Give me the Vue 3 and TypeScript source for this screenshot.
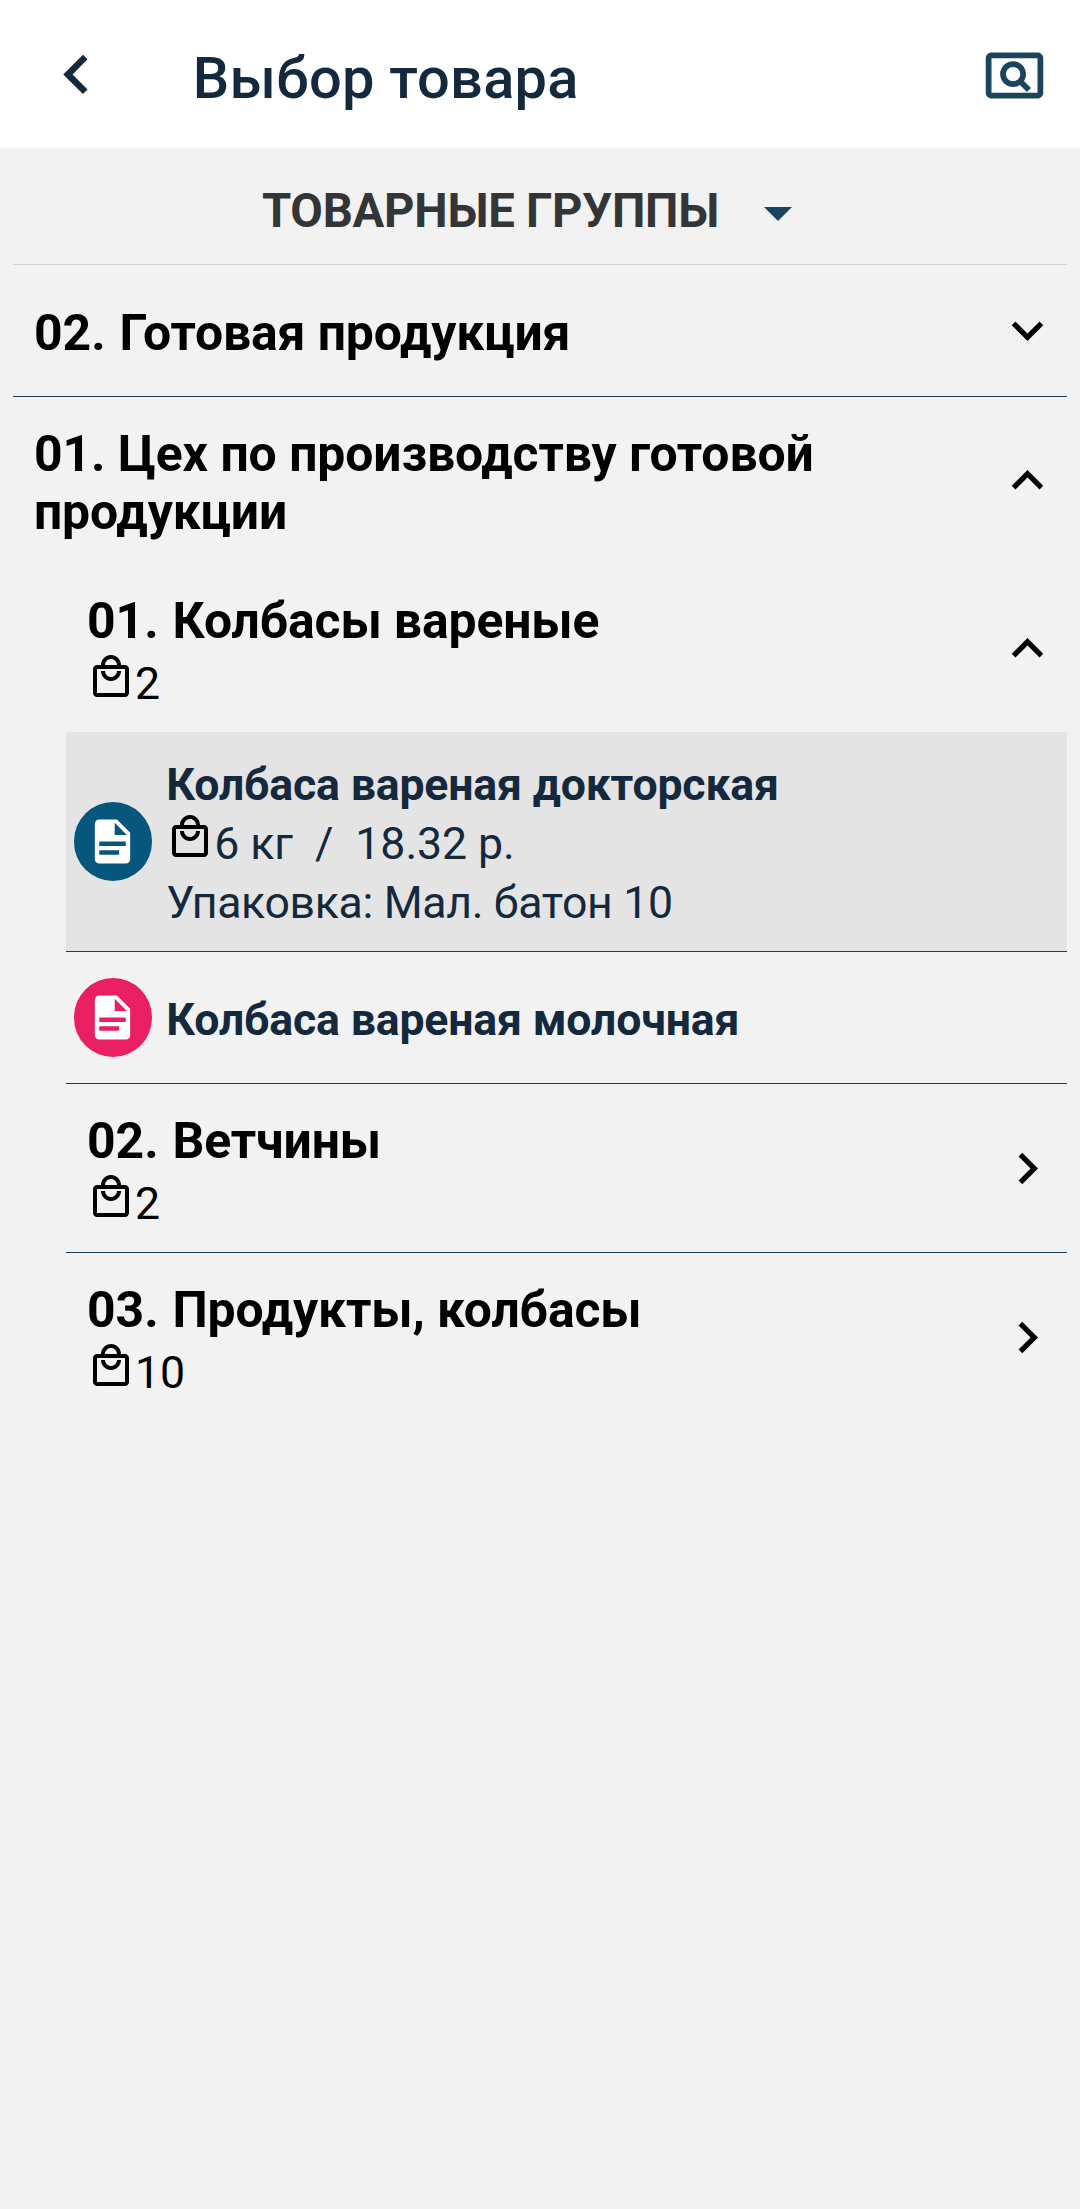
<script setup lang="ts">
interface Product {
  name: string
  selected: boolean
  quantity?: string
  packaging?: string
}
interface Group {
  code: string
  title: string
  count: number
  open: boolean
  products: Product[]
}

const icons = {
  back: 'M15.41 16.58 10.83 12l4.58-4.59L14 6l-6 6 6 6z',
  search:
    'M11.49 16c.88 0 1.7-.26 2.39-.7l2.44 2.44 1.42-1.42-2.44-2.43c.44-.7.7-1.51.7-2.39C16 9.01 13.99 7 11.5 7S7 9.01 7 11.5 9.01 16 11.49 16zm.01-7a2.5 2.5 0 0 1 0 5 2.5 2.5 0 0 1 0-5zM20 4H4c-1.1 0-2 .9-2 2v12c0 1.1.9 2 2 2h16c1.1 0 2-.9 2-2V6c0-1.1-.9-2-2-2zm0 14H4V6h16v12z',
  down: 'M7.41 8.59 12 13.17l4.59-4.58L18 10l-6 6-6-6z',
  up: 'M7.41 15.41 12 10.83l4.59 4.58L18 14l-6-6-6 6z',
  right: 'M8.59 16.59 13.17 12 8.59 7.41 10 6l6 6-6 6z',
  bag: 'M19 6h-2c0-2.76-2.24-5-5-5S7 3.24 7 6H5c-1.1 0-1.99.9-1.99 2L3 20c0 1.1.9 2 2 2h14c1.1 0 2-.9 2-2V8c0-1.1-.9-2-2-2zm-7-3c1.66 0 3 1.34 3 3H9c0-1.66 1.34-3 3-3zm7 17H5V8h14v12zm-7-8c-1.66 0-3-1.34-3-3H7c0 2.76 2.24 5 5 5s5-2.24 5-5h-2c0 1.66-1.34 3-3 3z',
  doc: 'M13 9h5.5L13 3.5V9M6 2h8l6 6v12a2 2 0 0 1-2 2H6a2 2 0 0 1-2-2V4c0-1.11.89-2 2-2m9 16v-2H6v2h9m3-4v-2H6v2h12Z',
}

const groups: Group[] = [
  {
    code: '01.',
    title: 'Колбасы вареные',
    count: 2,
    open: true,
    products: [
      {
        name: 'Колбаса вареная докторская',
        selected: true,
        quantity: '6 кг  /  18.32 р.',
        packaging: 'Упаковка: Мал. батон 10',
      },
      { name: 'Колбаса вареная молочная', selected: false },
    ],
  },
  { code: '02.', title: 'Ветчины', count: 2, open: false, products: [] },
  { code: '03.', title: 'Продукты, колбасы', count: 10, open: false, products: [] },
]
</script>

<template>
  <div class="screen">
    <header class="appbar">
      <svg class="back" viewBox="0 0 24 24"><path :d="icons.back" /></svg>
      <h1>Выбор товара</h1>
      <svg class="search" viewBox="0 0 24 24"><path :d="icons.search" /></svg>
    </header>

    <main>
      <div class="filter">
        <span>ТОВАРНЫЕ ГРУППЫ</span>
        <svg viewBox="0 0 28 14"><path d="M0 0h28L14 14z" /></svg>
      </div>

      <div class="section ruled">
        <span class="title"><span class="code">02.</span> Готовая продукция</span>
        <svg class="chevron" viewBox="0 0 24 24"><path :d="icons.down" /></svg>
      </div>
      <div class="section tall">
        <span class="title">01. Цех по производству готовой продукции</span>
        <svg class="chevron" viewBox="0 0 24 24"><path :d="icons.up" /></svg>
      </div>

      <div class="children">
        <template v-for="(group, i) in groups" :key="group.title">
          <div class="group" :class="{ ruled: !group.open && i < groups.length - 1 }">
            <div class="label">
              <span class="title"><span class="code">{{ group.code }}</span> {{ group.title }}</span>
              <span class="count">
                <svg class="bag" viewBox="0 0 24 24"><path :d="icons.bag" /></svg>{{ group.count }}
              </span>
            </div>
            <svg class="chevron" viewBox="0 0 24 24">
              <path :d="group.open ? icons.up : icons.right" />
            </svg>
          </div>
          <div
            v-for="product in group.products"
            :key="product.name"
            class="product ruled"
            :class="{ selected: product.selected }"
          >
            <span class="avatar">
              <svg viewBox="0 0 24 24"><path :d="icons.doc" /></svg>
            </span>
            <div class="info">
              <span class="name">{{ product.name }}</span>
              <span v-if="product.quantity" class="quantity">
                <svg class="bag" viewBox="0 0 24 24"><path :d="icons.bag" /></svg
                ><span>{{ product.quantity }}</span>
              </span>
              <span v-if="product.packaging" class="packaging">{{ product.packaging }}</span>
            </div>
          </div>
        </template>
      </div>
    </main>
  </div>
</template>

<style>
body {
  background: #f2f2f2;
}
</style>

<style scoped>
.screen {
  width: 1080px;
  min-height: 2209px;
  background: #f2f2f2;
  font-family: Roboto, 'Noto Sans', sans-serif;
  color: #000;
}
svg {
  display: block;
  flex: none;
  fill: currentColor;
}
.appbar {
  display: flex;
  align-items: center;
  box-sizing: border-box;
  height: 148px;
  padding: 0 31px 0 37px;
  background: #fff;
  color: #14293d;
}
.back {
  width: 78.75px;
  height: 78.75px;
}
.appbar h1 {
  flex: 1;
  margin: 8px 0 0 77px;
  font-size: 57.75px;
  line-height: 68px;
  font-weight: 500;
  letter-spacing: 0.25px;
}
.search {
  width: 69px;
  height: 69px;
  margin-top: 2px;
  color: #1b455e;
}
main {
  padding: 0 13px;
}
.filter {
  display: flex;
  justify-content: center;
  align-items: center;
  box-sizing: border-box;
  height: 117px;
  padding-right: 26px;
  gap: 45px;
  border-bottom: 1px solid #d3d3d3;
  color: #343536;
  font-size: 47.25px;
  font-weight: 700;
  letter-spacing: -0.25px;
}
.filter span {
  padding-top: 10px;
}
.filter svg {
  width: 28px;
  height: 14px;
  margin-top: 15px;
  color: #1b455e;
}
.section,
.group {
  display: flex;
  align-items: center;
  justify-content: space-between;
  height: 131px;
  padding: 0 8px 0 21px;
}
.section.tall {
  height: 167px;
}
.section .title {
  max-width: 880px;
  margin-top: 5px;
}
.section.tall .title {
  word-spacing: 0.4px;
}
.ruled {
  border-bottom: 1px solid #1c3d54;
}
.title {
  font-size: 49.875px;
  line-height: 58px;
  font-weight: 700;
  letter-spacing: -0.12px;
}
.code {
  margin-right: 1.5px;
  letter-spacing: 0;
}
.chevron {
  width: 63px;
  height: 63px;
}
.children {
  margin-left: 53px;
}
.group {
  height: 168px;
}
.label,
.info {
  display: flex;
  flex-direction: column;
}
.label {
  gap: 5px;
  margin-top: 10px;
}
.info {
  margin-top: 5px;
}
.count,
.quantity {
  display: flex;
  align-items: flex-start;
  font-size: 44.625px;
  line-height: 59px;
}
.bag {
  width: 48px;
  height: 48px;
  margin-top: -1.5px;
  color: #000;
}
.count .bag {
  margin-top: -2px;
}
.product {
  display: flex;
  align-items: center;
  height: 131px;
  padding-left: 7.5px;
  color: #14293d;
  font-size: 44.625px;
  line-height: 59px;
}
.product.selected {
  height: 219px;
  background: #e4e4e4;
}
.avatar {
  display: flex;
  align-items: center;
  justify-content: center;
  width: 78.75px;
  height: 78.75px;
  margin-right: 14px;
  border-radius: 50%;
  background: #e91e63;
  color: #fff;
}
.selected .avatar {
  background: #06567d;
}
.avatar svg {
  width: 53px;
  height: 53px;
}
.name {
  font-weight: 700;
  letter-spacing: -0.18px;
}
.quantity {
  letter-spacing: -0.06px;
  white-space: pre;
}
.packaging {
  letter-spacing: -0.33px;
}
</style>
